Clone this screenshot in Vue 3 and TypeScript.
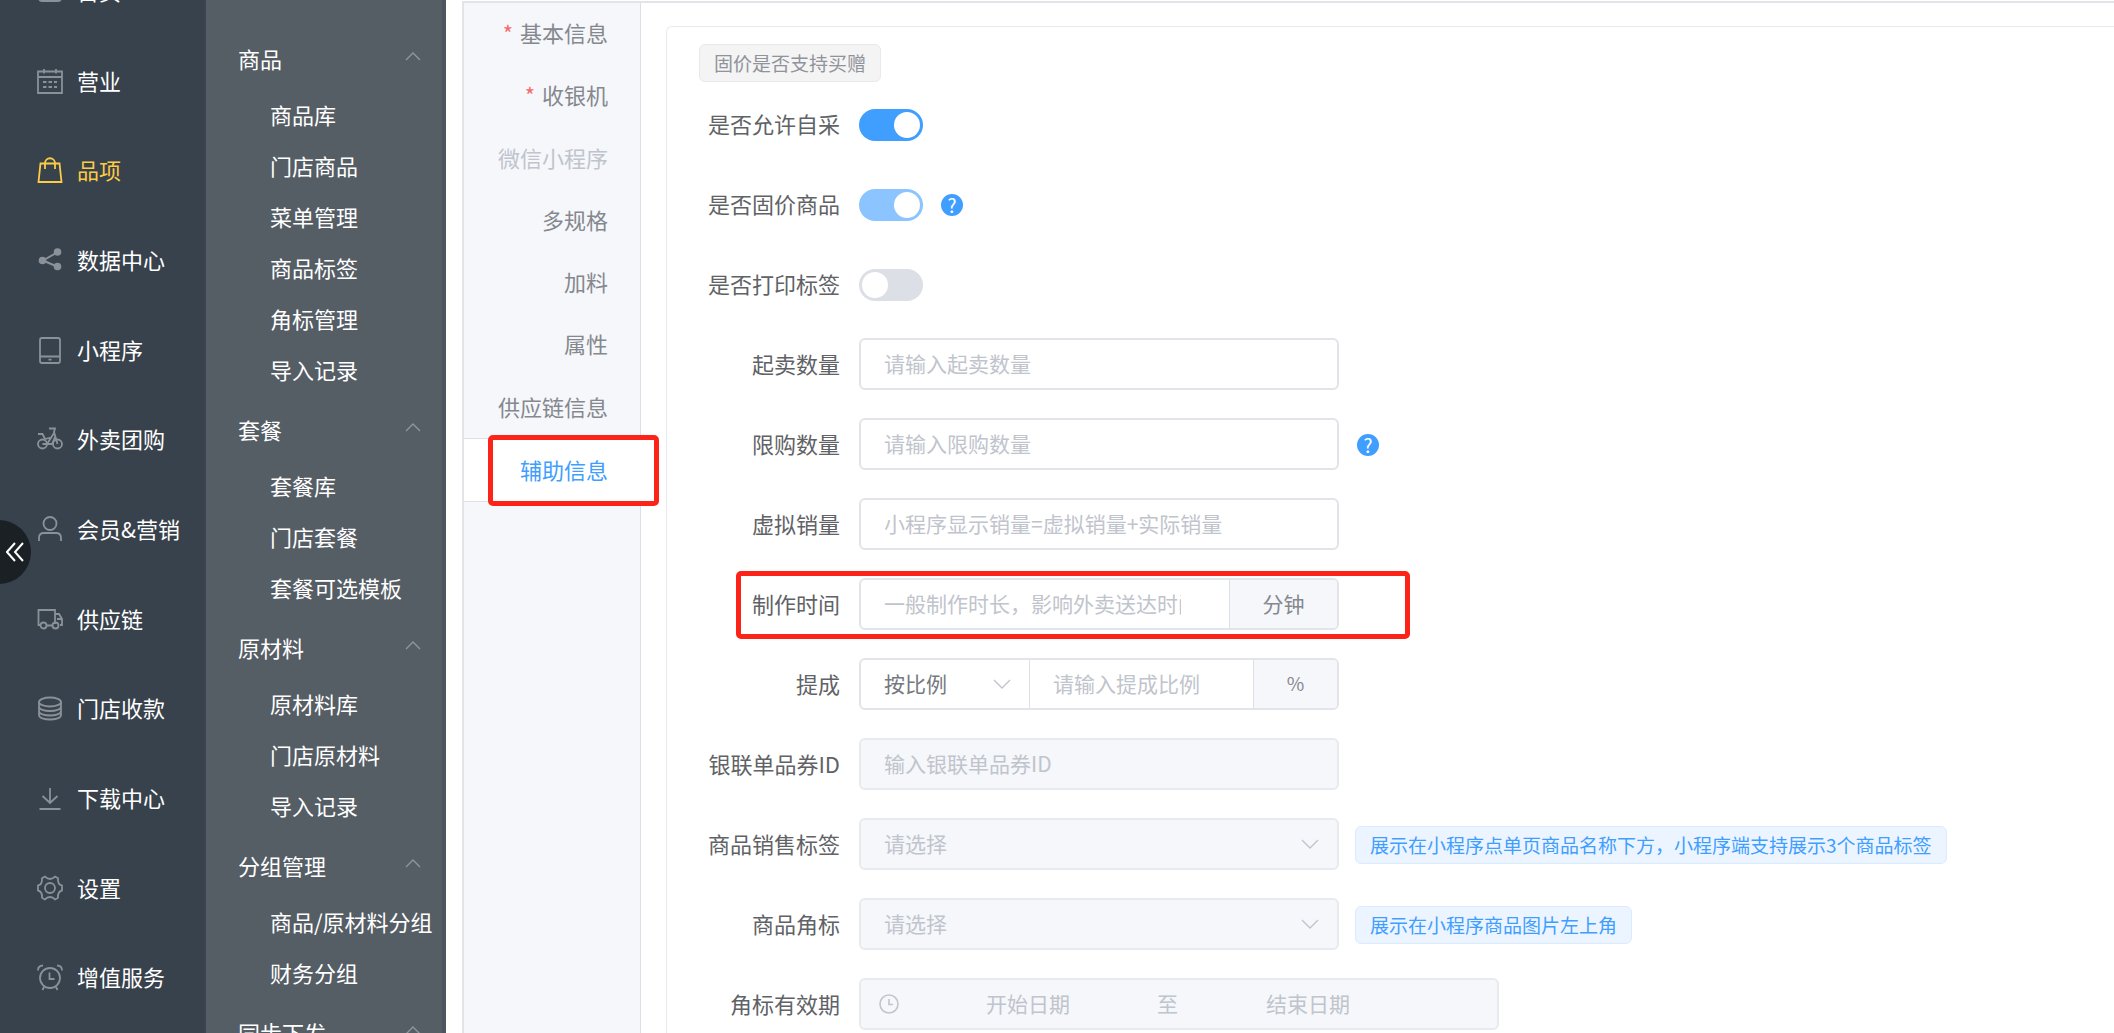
<script setup lang="ts">
import { ref } from 'vue'

interface NavItem { label: string; icon: string }
interface MenuGroup { title: string; items: string[] }
interface Tab { label: string; required?: boolean; disabled?: boolean }

const navItems: NavItem[] = [
  { label: '首页', icon: 'home' },
  { label: '营业', icon: 'calendar' },
  { label: '品项', icon: 'bag' },
  { label: '数据中心', icon: 'share' },
  { label: '小程序', icon: 'phone' },
  { label: '外卖团购', icon: 'bike' },
  { label: '会员&营销', icon: 'user' },
  { label: '供应链', icon: 'truck' },
  { label: '门店收款', icon: 'coins' },
  { label: '下载中心', icon: 'download' },
  { label: '设置', icon: 'gear' },
  { label: '增值服务', icon: 'alarm' },
]
const activeNav = ref('品项')

const groups: MenuGroup[] = [
  { title: '商品', items: ['商品库', '门店商品', '菜单管理', '商品标签', '角标管理', '导入记录'] },
  { title: '套餐', items: ['套餐库', '门店套餐', '套餐可选模板'] },
  { title: '原材料', items: ['原材料库', '门店原材料', '导入记录'] },
  { title: '分组管理', items: ['商品/原材料分组', '财务分组'] },
  { title: '同步下发', items: [] },
]

const tabs: Tab[] = [
  { label: '基本信息', required: true },
  { label: '收银机', required: true },
  { label: '微信小程序', disabled: true },
  { label: '多规格' },
  { label: '加料' },
  { label: '属性' },
  { label: '供应链信息' },
  { label: '辅助信息' },
]
const activeTab = ref('辅助信息')

const selfPurchase = ref(true)
const fixedPrice = ref(true)
const printLabel = ref(false)
const minQty = ref('')
const limitQty = ref('')
const virtualSales = ref('')
const makeTime = ref('')
const commissionType = ref('ratio')
const commission = ref('')
</script>

<template>
  <div class="app">
    <nav class="main-nav">
      <ul>
        <li v-for="item in navItems" :key="item.label">
          <a href="#" :class="{ active: item.label === activeNav }" @click.prevent="activeNav = item.label">
            <svg class="nav-icon" viewBox="0 0 26 26" aria-hidden="true">
              <path v-if="item.icon === 'home'" d="M2 2V20Q2 23 5 23H21Q24 23 24 20V2M8 18H18" />
              <template v-else-if="item.icon === 'calendar'">
                <path d="M1 3.500H25V25H1ZM1 9H25M7 1V5.500M19 1V5.500" />
                <path d="M6 14H9.500M11.500 14H15M17 14H20M6 19H9.500M11.500 19H15M17 19H20" />
              </template>
              <path v-else-if="item.icon === 'bag'" d="M3.500 6.500H22.500L24.500 25H1.500ZM8 12V6.500C8 -.5 18 -.5 18 6.500V12" />
              <template v-else-if="item.icon === 'share'">
                <path stroke-width="2" d="M20 5.500L6 13.500L20 19.500" />
                <g class="solid"><circle cx="20.500" cy="5" r="3.800" /><circle cx="5.500" cy="13.500" r="3.800" /><circle cx="20.500" cy="19.500" r="3.800" /></g>
              </template>
              <path v-else-if="item.icon === 'phone'" d="M5 1H21Q23 1 23 3V24Q23 26 21 26H5Q3 26 3 24V3Q3 1 5 1ZM3 19.500H23M11.500 22.700H14.500" />
              <template v-else-if="item.icon === 'bike'">
                <circle cx="5.500" cy="18" r="4.500" /><circle cx="20.500" cy="18" r="4.500" />
                <path d="M12 2.500H18L17 6L20.500 18M17 7L10 18H5.500M10 18H15L18 11M1 8H5.500L8 13L14 11.500" />
              </template>
              <template v-else-if="item.icon === 'user'">
                <circle cx="13" cy="7.500" r="6.500" />
                <path d="M2 25V22Q2 17 7 17H19Q24 17 24 22V25" />
              </template>
              <template v-else-if="item.icon === 'truck'">
                <path d="M4 19H1.500V4H18V18M9 19.500H15M18 8H22L25 13V19H23M20 13H25" />
                <circle cx="6.500" cy="19.500" r="3" /><circle cx="18.500" cy="19.500" r="3" />
              </template>
              <template v-else-if="item.icon === 'coins'">
                <ellipse cx="13" cy="7" rx="11" ry="4.500" />
                <path d="M2 7V20C2 26 24 26 24 20V7M2 11.500C2 17.500 24 17.500 24 11.500M2 16C2 22 24 22 24 16" />
              </template>
              <path v-else-if="item.icon === 'download'" d="M13 3V18M5.500 11L13 18L20.500 11M2.500 24H23.500" />
              <template v-else-if="item.icon === 'gear'">
                <path d="M8 1.500Q10 4 13 4Q16 4 18 1.500L21 3.200Q20.500 9.500 25 10.500V15.500Q20.500 16.500 21 22.800L18 24.500Q16 22 13 22Q10 22 8 24.500L5 22.800Q5.500 16.500 1 15.500V10.500Q5.500 9.500 5 3.200Z" stroke-linejoin="round" />
                <circle cx="13" cy="13" r="5" />
              </template>
              <template v-else>
                <circle cx="13" cy="14" r="10" />
                <path d="M12.500 8.500V15H17.500M1 6.500Q1 1.500 6 1.500M25 6.500Q25 1.500 20 1.500M7 23L5.500 26M19 23L20.500 26" />
              </template>
            </svg>
            <span>{{ item.label }}</span>
          </a>
        </li>
      </ul>
    </nav>

    <button class="collapse" type="button" aria-label="收起菜单">
      <svg viewBox="0 0 18 20" aria-hidden="true"><path d="M9 1L1 10L9 19M17 1L9 10L17 19" /></svg>
    </button>

    <aside class="sub-nav">
      <section v-for="group in groups" :key="group.title">
        <button class="group-title" type="button">
          <span>{{ group.title }}</span>
          <svg viewBox="0 0 16 9" aria-hidden="true"><path d="M1 8L8 1L15 8" /></svg>
        </button>
        <a v-for="item in group.items" :key="item" href="#" @click.prevent>{{ item }}</a>
      </section>
    </aside>

    <main class="page">
      <div class="tabs">
        <div class="tab-list">
          <div v-for="tab in tabs" :key="tab.label" class="tab" :class="{ current: tab.label === activeTab }">
            <button type="button" :disabled="tab.disabled" @click="activeTab = tab.label">
              <span v-if="tab.required" class="star">*</span>{{ tab.label }}
            </button>
            <i v-if="tab.label === '辅助信息'" class="mark mark-tab"></i>
          </div>
        </div>
      </div>

      <div class="content">
        <form class="card" @submit.prevent>
          <span class="tag tag-info">固价是否支持买赠</span>

          <div class="row">
            <label for="self">是否允许自采</label>
            <input id="self" v-model="selfPurchase" class="switch" type="checkbox" role="switch" />
          </div>
          <div class="row">
            <label for="fixed">是否固价商品</label>
            <input id="fixed" v-model="fixedPrice" class="switch" type="checkbox" role="switch" disabled />
            <button class="help" type="button">?</button>
          </div>
          <div class="row">
            <label for="print">是否打印标签</label>
            <input id="print" v-model="printLabel" class="switch" type="checkbox" role="switch" />
          </div>
          <div class="row">
            <label for="min">起卖数量</label>
            <div class="field"><input id="min" v-model="minQty" type="text" placeholder="请输入起卖数量" /></div>
          </div>
          <div class="row">
            <label for="limit">限购数量</label>
            <div class="field"><input id="limit" v-model="limitQty" type="text" placeholder="请输入限购数量" /></div>
            <button class="help" type="button">?</button>
          </div>
          <div class="row">
            <label for="virtual">虚拟销量</label>
            <div class="field"><input id="virtual" v-model="virtualSales" type="text" placeholder="小程序显示销量=虚拟销量+实际销量" /></div>
          </div>
          <div class="row">
            <label for="time">制作时间</label>
            <div class="field">
              <input id="time" v-model="makeTime" class="clearable" type="text" placeholder="一般制作时长，影响外卖送达时间" />
              <span class="append unit-time">分钟</span>
            </div>
            <i class="mark mark-row"></i>
          </div>
          <div class="row">
            <label for="commission">提成</label>
            <div class="field">
              <div class="picker picker-type">
                <select v-model="commissionType" aria-label="提成方式">
                  <option value="ratio">按比例</option>
                  <option value="fixed">按金额</option>
                </select>
                <svg viewBox="0 0 18 10" aria-hidden="true"><path d="M1 1L9 9L17 1" /></svg>
              </div>
              <input id="commission" v-model="commission" type="text" placeholder="请输入提成比例" />
              <span class="append unit-percent">%</span>
            </div>
          </div>
          <div class="row">
            <label for="union">银联单品券ID</label>
            <div class="field off"><input id="union" type="text" placeholder="输入银联单品券ID" disabled /></div>
          </div>
          <div class="row">
            <label for="sale-tag">商品销售标签</label>
            <div class="field off">
              <div class="picker">
                <select id="sale-tag" disabled><option>请选择</option></select>
                <svg viewBox="0 0 18 10" aria-hidden="true"><path d="M1 1L9 9L17 1" /></svg>
              </div>
            </div>
            <span class="tag tag-note">展示在小程序点单页商品名称下方，小程序端支持展示3个商品标签</span>
          </div>
          <div class="row">
            <label for="corner">商品角标</label>
            <div class="field off">
              <div class="picker">
                <select id="corner" disabled><option>请选择</option></select>
                <svg viewBox="0 0 18 10" aria-hidden="true"><path d="M1 1L9 9L17 1" /></svg>
              </div>
            </div>
            <span class="tag tag-note">展示在小程序商品图片左上角</span>
          </div>
          <div class="row">
            <label for="start">角标有效期</label>
            <div class="field off range">
              <svg class="clock" viewBox="0 0 20 20" aria-hidden="true"><circle cx="10" cy="10" r="9" /><path d="M10 5V10.500H14" /></svg>
              <input id="start" type="text" placeholder="开始日期" disabled />
              <span>至</span>
              <input type="text" aria-label="结束日期" placeholder="结束日期" disabled />
            </div>
          </div>
        </form>
      </div>
    </main>
  </div>
</template>

<style>
body {
  margin: 0;
  background: #fff;
}
</style>

<style scoped>
* {
  box-sizing: border-box;
}
.app {
  position: relative;
  display: flex;
  height: 100vh;
  overflow: hidden;
  font-family: "Noto Sans CJK SC", "Noto Sans", sans-serif;
  font-size: 22px;
  color: #606266;
}
button,
input,
select {
  font: inherit;
  color: inherit;
  margin: 0;
  padding: 0;
  border: 0;
  background: none;
}
a {
  color: inherit;
  text-decoration: none;
}
svg {
  flex: none;
  fill: none;
  stroke: currentColor;
}

/* primary navigation */
.main-nav {
  flex: none;
  width: 206px;
  background: #38424c;
  border-right: 2px solid #3b4350;
  color: #fff;
}
.main-nav ul {
  display: flex;
  flex-direction: column;
  height: 1076px;
  margin: -54px 0 0;
  padding: 0;
  list-style: none;
}
.main-nav li {
  flex: 1;
}
.main-nav a {
  display: flex;
  align-items: center;
  gap: 14px;
  height: 100%;
  padding-left: 37px;
  white-space: nowrap;
}
.main-nav span {
  padding-bottom: 2px;
}
.nav-icon {
  width: 26px;
  height: 26px;
  stroke-width: 1.8;
  color: #8b9199;
  overflow: visible;
}
.solid {
  fill: currentColor;
  stroke: none;
}
.main-nav .active,
.active .nav-icon {
  color: #fdcc45;
}
.collapse {
  position: absolute;
  left: -33px;
  top: 520px;
  width: 64px;
  height: 64px;
  padding-left: 39px;
  border-radius: 50%;
  background: #1b2024;
  color: #fff;
}
.collapse svg {
  display: block;
  width: 18px;
  height: 20px;
  stroke-width: 2;
}

/* secondary navigation */
.sub-nav {
  flex: none;
  width: 240px;
  padding-top: 24px;
  background: #555d65;
  border-right: 4px solid #4d565f;
  color: #fff;
  overflow: hidden;
}
.group-title {
  display: flex;
  align-items: center;
  justify-content: space-between;
  width: 100%;
  height: 65px;
  padding: 2px 21px 0 32px;
}
.group-title svg {
  width: 16px;
  height: 9px;
  margin-bottom: 3px;
  color: #90969c;
  stroke-width: 1.4;
}
.sub-nav a {
  display: block;
  height: 51px;
  padding-left: 64px;
  line-height: 51px;
  white-space: nowrap;
}

/* page */
.page {
  flex: 1;
  display: flex;
  min-width: 0;
  margin: 1px 0 0 16px;
  border-top: 2px solid #e2e4e8;
  border-left: 2px solid #e2e4e8;
}
.tabs {
  flex: none;
  width: 177px;
  background: #f5f7fb;
  border-right: 1px solid #dcdfe6;
}
.tab-list {
  display: flex;
  flex-direction: column;
  height: 500px;
  margin-top: -1px;
}
.tab {
  position: relative;
  flex: 1;
  color: #85888e;
}
.tab button {
  width: 100%;
  height: 100%;
  padding: 0 32px 2px 0;
  text-align: right;
  white-space: nowrap;
}
.tab button:disabled {
  color: #c0c4cc;
}
.tab.current {
  margin-right: -1px;
  background: #fff;
  border-top: 1px solid #dcdfe6;
  border-bottom: 1px solid #dcdfe6;
  color: #409eff;
}
.tab.current button {
  padding-right: 33px;
}
.star {
  margin-right: 7px;
  color: #f56c6c;
}
.content {
  flex: 1;
  min-width: 0;
  padding: 23px 0 0 25px;
  background: #fff;
}
.card {
  padding: 17px 0 20px 32px;
  border: 1px solid #e6e9ef;
  border-width: 1px 0 1px 1px;
  border-radius: 6px 0 0 6px;
}
.tag {
  display: inline-block;
  height: 38px;
  padding: 0 14px;
  border: 1px solid;
  border-radius: 6px;
  font-size: 19px;
  line-height: 35px;
  white-space: nowrap;
}
.tag-info {
  display: block;
  width: fit-content;
  margin-bottom: 2px;
  background: #f4f4f5;
  border-color: #e9e9eb;
  color: #909399;
}
.tag-note {
  margin: 2px 0 0 16px;
  background: #ecf5ff;
  border-color: #d9ecff;
  color: #409eff;
}
.row {
  position: relative;
  display: flex;
  align-items: center;
  height: 80px;
}
.row label {
  flex: none;
  width: 160px;
  padding: 0 19px 3px 0;
  text-align: right;
  white-space: nowrap;
}
.switch {
  appearance: none;
  width: 64px;
  height: 32px;
  margin-top: 2px;
  padding: 3px;
  border-radius: 16px;
  background: #dcdfe6;
}
.switch::before {
  content: "";
  display: block;
  width: 26px;
  height: 26px;
  border-radius: 50%;
  background: #fff;
}
.switch:checked {
  background: #409eff;
}
.switch:checked::before {
  margin-left: auto;
}
.switch:disabled {
  opacity: 0.6;
}
.help {
  width: 22px;
  height: 22px;
  margin: 2px 0 0 18px;
  border-radius: 50%;
  background: #409eff;
  color: #fff;
  font-size: 19px;
  line-height: 22px;
  text-align: center;
}
.field {
  display: flex;
  align-items: center;
  width: 480px;
  height: 52px;
  border: 2px solid #e2e4e9;
  border-radius: 6px;
  background: #fff;
  font-size: 21px;
  color: #75787e;
  overflow: hidden;
}
.field input {
  flex: 1;
  min-width: 0;
  height: 100%;
  padding: 0 23px 3px;
}
.field .clearable {
  padding-right: 48px;
}
.field input::placeholder {
  color: #c0c4cc;
  opacity: 1;
}
.field.off {
  background: #f5f7fb;
  border-color: #e7eaef;
  color: #c0c4cc;
}
.append {
  display: flex;
  align-items: center;
  justify-content: center;
  height: 100%;
  padding-bottom: 3px;
  border-left: 1px solid #dcdfe6;
  background: #f5f7fb;
  color: #85888e;
}
.unit-time {
  width: 108px;
}
.unit-percent {
  width: 84px;
  font-size: 19px;
}
.picker {
  position: relative;
  flex: 1;
  height: 100%;
}
.picker select {
  appearance: none;
  width: 100%;
  height: 100%;
  padding: 0 50px 3px 23px;
  opacity: 1;
}
.picker svg {
  position: absolute;
  right: 18px;
  top: 19px;
  width: 18px;
  height: 10px;
  color: #c0c4cc;
  stroke-width: 1.4;
  pointer-events: none;
}
.picker-type {
  flex: none;
  width: 169px;
  border-right: 1px solid #dcdfe6;
}
.range {
  width: 640px;
  padding: 0 60px 0 18px;
}
.range input {
  text-align: center;
}
.range span {
  width: 22px;
  padding-bottom: 3px;
}
.clock {
  width: 20px;
  height: 20px;
  stroke-width: 1.6;
}

/* red call-outs over the form */
.mark {
  position: absolute;
  z-index: 1;
  border: 5px solid #fc2418;
  border-radius: 5px;
  pointer-events: none;
}
.mark-tab {
  left: 24px;
  top: -4px;
  width: 171px;
  height: 71px;
}
.mark-row {
  left: 37px;
  top: 7px;
  width: 674px;
  height: 68px;
}
</style>
